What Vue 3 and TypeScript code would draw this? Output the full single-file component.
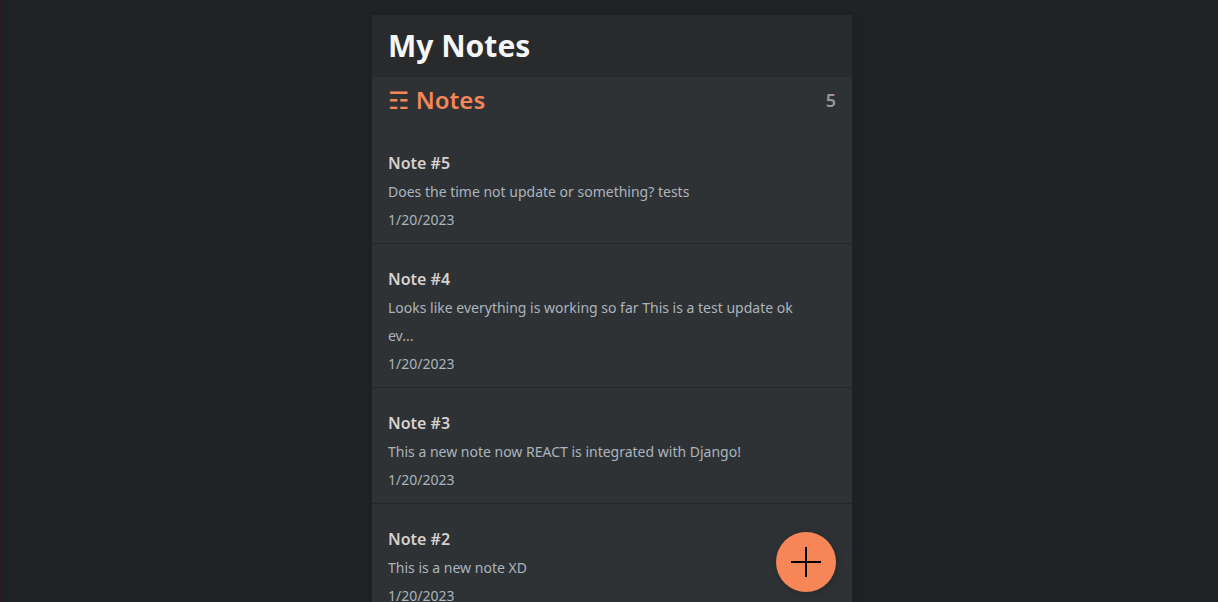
<script setup lang="ts">
import { ref } from 'vue'

interface Note {
  id: number
  title: string
  body: string
  updated: string
}

const total = ref<number>(5)

const notes = ref<Note[]>([
  { id: 5, title: 'Note #5', body: 'Does the time not update or something? tests', updated: '1/20/2023' },
  { id: 4, title: 'Note #4', body: 'Looks like everything is working so far This is a test update ok ev...', updated: '1/20/2023' },
  { id: 3, title: 'Note #3', body: 'This a new note now REACT is integrated with Django!', updated: '1/20/2023' },
  { id: 2, title: 'Note #2', body: 'This is a new note XD', updated: '1/20/2023' },
])
</script>

<template>
  <div class="container">
    <div class="app">
      <header class="app-header">
        <h1>My Notes</h1>
      </header>
      <main class="notes">
        <div class="notes-header">
          <h2 class="notes-title">&#9782; Notes</h2>
          <p class="notes-count">{{ total }}</p>
        </div>
        <div class="notes-list">
          <a v-for="note in notes" :key="note.id" class="note" :href="`#/note/${note.id}`">
            <h3>{{ note.title }}</h3>
            <p class="note-body">{{ note.body }}</p>
            <p class="note-date">{{ note.updated }}</p>
          </a>
        </div>
        <button class="add-button" type="button" aria-label="Add note">
          <svg viewBox="0 0 32 32" aria-hidden="true">
            <path d="M16 1v30M1 16h30" />
          </svg>
        </button>
      </main>
    </div>
  </div>
</template>

<style>
body {
  margin: 0;
  background: #1f2124;
}
</style>

<style scoped>
.container {
  box-sizing: border-box;
  height: 100vh;
  padding: 15px 0 0 5px;
  overflow-y: auto;
  scrollbar-width: none;
  border-left: 1px solid #2a1a24;
  background: #1f2124;
  color: #d6d1d1;
  font-family: "Noto Sans", "DejaVu Sans", sans-serif;
}

.app {
  width: 100%;
  max-width: 480px;
  min-height: 88vh;
  margin: 0 auto;
  background: #2e3235;
  box-shadow: 1px 1px 6px rgba(0, 0, 0, 0.05);
}

h1,
h2,
h3,
p {
  margin: 0;
}

.app-header {
  padding: 16px;
  background: #292a2c;
}

.app-header h1 {
  color: #f5f6f7;
  font-size: 30px;
  font-weight: 700;
  line-height: 30px;
}

.notes-header {
  display: flex;
  align-items: center;
  justify-content: space-between;
  padding: 7px 16px 12px;
}

.notes-title {
  color: #f68657;
  font-size: 24px;
  font-weight: 600;
  line-height: 32px;
}

.notes-count {
  color: #969696;
  font-size: 18px;
  font-weight: 600;
  line-height: 32px;
}

.note {
  display: block;
  padding: 20px 16px 9px;
  border-bottom: 1px solid #252629;
  color: inherit;
  text-decoration: none;
}

.note h3 {
  font-size: 16px;
  font-weight: 600;
  line-height: 30px;
}

.note-body,
.note-date {
  color: #acb4bd;
  font-size: 14px;
  line-height: 28px;
}

.note-body {
  padding-right: 20px;
}

.add-button {
  position: fixed;
  right: calc(50% - 227px);
  bottom: 10px;
  display: flex;
  align-items: center;
  justify-content: center;
  width: 60px;
  height: 60px;
  padding: 0;
  border: 0;
  border-radius: 50%;
  background: #f68657;
  box-shadow: 1px 1px 10px rgba(0, 0, 0, 0.2);
  cursor: pointer;
}

.add-button svg {
  width: 32px;
  height: 32px;
  fill: none;
  stroke: #000;
  stroke-width: 2;
}
</style>
